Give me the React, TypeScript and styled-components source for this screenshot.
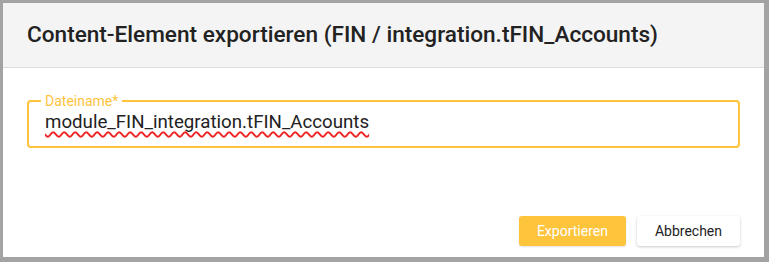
import React, { FC } from 'react';
import styled, { createGlobalStyle } from 'styled-components';

const GlobalStyle = createGlobalStyle`
  html, body {
    margin: 0;
    padding: 0;
    background: #a3a3a3;
  }
  * {
    box-sizing: border-box;
  }
`;

const accent = '#fec43c';
const fileName = 'module_FIN_integration.tFIN_Accounts';

const Frame = styled.div`
  width: 769px;
  height: 262px;
  padding: 3px 5px 5px 3px;
  background: #a3a3a3;
`;

const Dialog = styled.div`
  height: 100%;
  background: #ffffff;
  display: flex;
  flex-direction: column;
  font-family: Roboto, 'Liberation Sans', sans-serif;
`;

const Header = styled.div`
  height: 65px;
  padding: 0 24px;
  display: flex;
  align-items: center;
  background: #f4f4f4;
  border-bottom: 1px solid #dcdcdc;
`;

const Title = styled.h1`
  margin: 0;
  padding: 0 0 2px;
  font-size: 22.6px;
  font-weight: 500;
  color: #222222;
`;

const Body = styled.div`
  flex: 1;
  padding: 26px 24px 0;
`;

const Field = styled.fieldset`
  margin: 0;
  padding: 0 12px 9px;
  border: 2px solid ${accent};
  border-radius: 4px;
`;

const Legend = styled.legend`
  padding: 0 4px;
  font-size: 14px;
  line-height: 14px;
  color: ${accent};
`;

const InputWrap = styled.div`
  position: relative;
  height: 29px;
`;

const textStyle = `
  font-family: Roboto, 'Liberation Sans', sans-serif;
  font-size: 18.7px;
  line-height: 29px;
  padding: 0 4px;
`;

const Input = styled.input`
  ${textStyle}
  display: block;
  width: 100%;
  height: 29px;
  border: none;
  outline: none;
  background: transparent;
  color: #222222;
`;

/* mirror of the input text that only shows the spell-check squiggle */
const Squiggle = styled.span`
  ${textStyle}
  position: absolute;
  left: 0;
  top: 0;
  color: transparent;
  white-space: pre;
  pointer-events: none;
  text-decoration: underline wavy #ee2222;
  text-decoration-thickness: 1.5px;
  text-decoration-skip-ink: none;
  text-underline-offset: 3px;
`;

const Footer = styled.div`
  display: flex;
  justify-content: flex-end;
  gap: 11px;
  padding: 0 24px 11px;
`;

const Button = styled.button<{ primary?: boolean }>`
  height: 30px;
  padding: 0 18px;
  border: none;
  border-radius: 3px;
  font-family: Roboto, 'Liberation Sans', sans-serif;
  font-size: 14px;
  cursor: pointer;
  background: ${({ primary }) => (primary ? accent : '#ffffff')};
  color: ${({ primary }) => (primary ? '#ffffff' : '#222222')};
  box-shadow: ${({ primary }) =>
    primary ? '0 1px 2px rgba(0, 0, 0, 0.12)' : '0 1px 3px rgba(0, 0, 0, 0.22)'};
`;

const App: FC = () => (
  <>
    <GlobalStyle />
    <Frame>
      <Dialog>
        <Header>
          <Title>Content-Element exportieren (FIN / integration.tFIN_Accounts)</Title>
        </Header>
        <Body>
          <Field>
            <Legend>Dateiname*</Legend>
            <InputWrap>
              <Input defaultValue={fileName} spellCheck={false} />
              <Squiggle aria-hidden>{fileName}</Squiggle>
            </InputWrap>
          </Field>
        </Body>
        <Footer>
          <Button primary>Exportieren</Button>
          <Button>Abbrechen</Button>
        </Footer>
      </Dialog>
    </Frame>
  </>
);

export default App;
